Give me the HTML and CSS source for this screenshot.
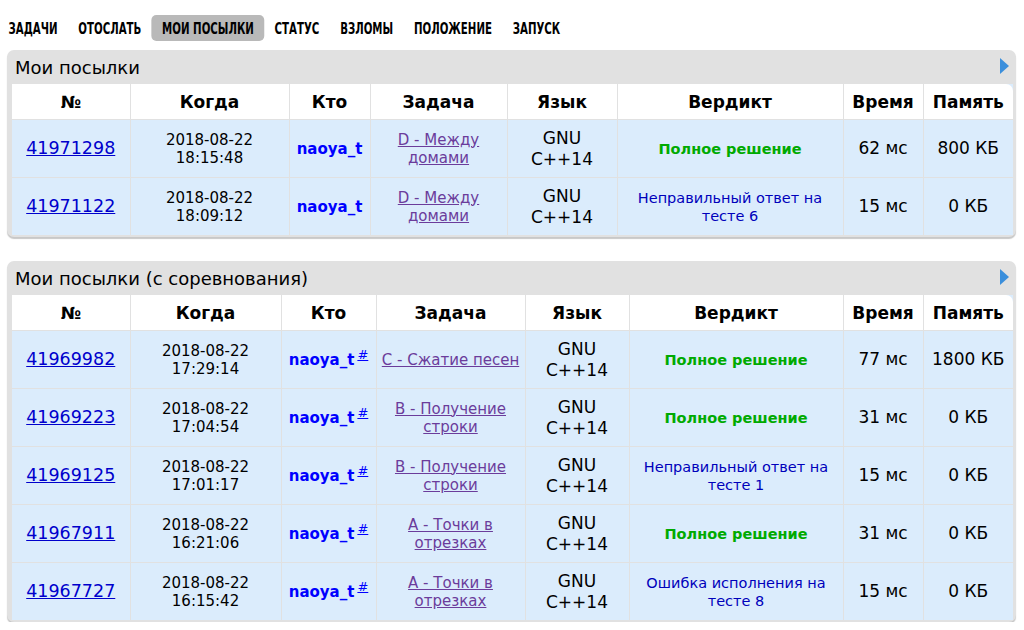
FILE: index.html
```html
<!DOCTYPE html>
<html lang="ru">
<head>
<meta charset="utf-8">
<title>Мои посылки</title>
<link rel="stylesheet" href="styles.css">
</head>
<body>
<nav class="menu">
  <a href="#">ЗАДАЧИ</a>
  <a href="#">ОТОСЛАТЬ</a>
  <a href="#" class="current">МОИ ПОСЫЛКИ</a>
  <a href="#">СТАТУС</a>
  <a href="#">ВЗЛОМЫ</a>
  <a href="#">ПОЛОЖЕНИЕ</a>
  <a href="#">ЗАПУСК</a>
</nav>

<section class="box">
  <div class="box-title"><span>Мои посылки</span><span class="toggle"></span></div>
  <table class="status t1">
    <colgroup>
      <col class="c-id"><col class="c-when"><col class="c-who"><col class="c-task"><col class="c-lang"><col class="c-verdict"><col class="c-time"><col class="c-mem">
    </colgroup>
    <tr class="head"><th>№</th><th>Когда</th><th>Кто</th><th>Задача</th><th>Язык</th><th>Вердикт</th><th>Время</th><th>Память</th></tr>
    <tr>
      <td><a class="sid" href="#">41971298</a></td>
      <td class="when">2018-08-22<br>18:15:48</td>
      <td><a class="user" href="#">naoya_t</a></td>
      <td><a class="task" href="#">D - Между<br>домами</a></td>
      <td class="lang">GNU<br>C++14</td>
      <td><span class="ok">Полное решение</span></td>
      <td class="num">62 мс</td>
      <td class="num">800 КБ</td>
    </tr>
    <tr>
      <td><a class="sid" href="#">41971122</a></td>
      <td class="when">2018-08-22<br>18:09:12</td>
      <td><a class="user" href="#">naoya_t</a></td>
      <td><a class="task" href="#">D - Между<br>домами</a></td>
      <td class="lang">GNU<br>C++14</td>
      <td><span class="fail">Неправильный ответ на<br>тесте 6</span></td>
      <td class="num">15 мс</td>
      <td class="num">0 КБ</td>
    </tr>
  </table>
</section>

<section class="box">
  <div class="box-title"><span>Мои посылки (с соревнования)</span><span class="toggle"></span></div>
  <table class="status t2">
    <colgroup>
      <col class="c-id"><col class="c-when"><col class="c-who"><col class="c-task"><col class="c-lang"><col class="c-verdict"><col class="c-time"><col class="c-mem">
    </colgroup>
    <tr class="head"><th>№</th><th>Когда</th><th>Кто</th><th>Задача</th><th>Язык</th><th>Вердикт</th><th>Время</th><th>Память</th></tr>
    <tr>
      <td><a class="sid" href="#">41969982</a></td>
      <td class="when">2018-08-22<br>17:29:14</td>
      <td><a class="user" href="#">naoya_t</a><sup><a class="room" href="#">#</a></sup></td>
      <td><a class="task" href="#">C - Сжатие песен</a></td>
      <td class="lang">GNU<br>C++14</td>
      <td><span class="ok">Полное решение</span></td>
      <td class="num">77 мс</td>
      <td class="num">1800 КБ</td>
    </tr>
    <tr>
      <td><a class="sid" href="#">41969223</a></td>
      <td class="when">2018-08-22<br>17:04:54</td>
      <td><a class="user" href="#">naoya_t</a><sup><a class="room" href="#">#</a></sup></td>
      <td><a class="task" href="#">B - Получение<br>строки</a></td>
      <td class="lang">GNU<br>C++14</td>
      <td><span class="ok">Полное решение</span></td>
      <td class="num">31 мс</td>
      <td class="num">0 КБ</td>
    </tr>
    <tr>
      <td><a class="sid" href="#">41969125</a></td>
      <td class="when">2018-08-22<br>17:01:17</td>
      <td><a class="user" href="#">naoya_t</a><sup><a class="room" href="#">#</a></sup></td>
      <td><a class="task" href="#">B - Получение<br>строки</a></td>
      <td class="lang">GNU<br>C++14</td>
      <td><span class="fail">Неправильный ответ на<br>тесте 1</span></td>
      <td class="num">15 мс</td>
      <td class="num">0 КБ</td>
    </tr>
    <tr>
      <td><a class="sid" href="#">41967911</a></td>
      <td class="when">2018-08-22<br>16:21:06</td>
      <td><a class="user" href="#">naoya_t</a><sup><a class="room" href="#">#</a></sup></td>
      <td><a class="task" href="#">A - Точки в<br>отрезках</a></td>
      <td class="lang">GNU<br>C++14</td>
      <td><span class="ok">Полное решение</span></td>
      <td class="num">31 мс</td>
      <td class="num">0 КБ</td>
    </tr>
    <tr>
      <td><a class="sid" href="#">41967727</a></td>
      <td class="when">2018-08-22<br>16:15:42</td>
      <td><a class="user" href="#">naoya_t</a><sup><a class="room" href="#">#</a></sup></td>
      <td><a class="task" href="#">A - Точки в<br>отрезках</a></td>
      <td class="lang">GNU<br>C++14</td>
      <td><span class="fail">Ошибка исполнения на<br>тесте 8</span></td>
      <td class="num">15 мс</td>
      <td class="num">0 КБ</td>
    </tr>
  </table>
</section>
</body>
</html>
```
FILE: styles.css
```css
html, body {
  margin: 0;
  padding: 0;
  background: #fff;
}

body {
  font-family: "DejaVu Sans", Verdana, sans-serif;
  color: #000;
  padding: 15px 8px 0 7px;
}

/* top second-level menu: a narrow bold face, squeezed horizontally */
.menu {
  display: flex;
  align-items: center;
  height: 26px;
  margin-left: -9.5px;
  transform: scaleX(0.71);
  transform-origin: left center;
}

.menu a {
  font-family: "DejaVu Sans Condensed", sans-serif;
  font-weight: bold;
  font-size: 16px;
  color: #000;
  text-decoration: none;
  padding: 0 14.5px 0 14.8px;
  height: 26px;
  line-height: 28px;
  border-radius: 7px / 5px;
  white-space: nowrap;
}

.menu a.current {
  background: #b9b9b9;
}

/* roundbox */
.box {
  background: #e1e1e1;
  border-radius: 7px;
  padding: 0 3px 2px 5px;
  box-shadow: 0 2px 1px #c8c8c8;
  margin-top: 9px;
}

.box + .box {
  margin-top: 24px;
}

.box-title {
  display: flex;
  justify-content: space-between;
  align-items: center;
  height: 34px;
  padding: 0 4px 0 3px;
  font-size: 18px;
  color: #000;
}

.toggle {
  width: 0;
  height: 0;
  border-top: 8px solid transparent;
  border-bottom: 8px solid transparent;
  border-left: 9px solid #3b8fdc;
  margin-top: -3px;
}

/* status table */
.status {
  width: 100%;
  border-collapse: collapse;
  table-layout: fixed;
  background: #dbecfc;
}

.status th,
.status td {
  border: 1px solid #e1e1e1;
  text-align: center;
  vertical-align: middle;
  padding: 0 4px;
}

.status tr:first-child th { border-top: none; }
.status tr th:first-child,
.status tr td:first-child { border-left: none; }
.status tr th:last-child,
.status tr td:last-child { border-right: none; }
.status tr:last-child td { border-bottom: none; }

.status .head {
  background: #fff;
}

.status .head th {
  height: 35px;
  font-size: 17px;
  font-weight: bold;
}

.status .head th:last-child {
  border-top-right-radius: 7px;
}

.status td {
  height: 57px;
  font-size: 15px;
  line-height: 18px;
}

.t1 .c-id { width: 118px; }
.t1 .c-when { width: 159px; }
.t1 .c-who { width: 81px; }
.t1 .c-task { width: 137px; }
.t1 .c-lang { width: 110px; }
.t1 .c-verdict { width: 226px; }
.t1 .c-time { width: 80px; }
.t1 .c-mem { width: 90px; }

.t2 .c-id { width: 118px; }
.t2 .c-when { width: 151px; }
.t2 .c-who { width: 95px; }
.t2 .c-task { width: 149px; }
.t2 .c-lang { width: 104px; }
.t2 .c-verdict { width: 214px; }
.t2 .c-time { width: 80px; }
.t2 .c-mem { width: 90px; }

.sid {
  font-size: 17.5px;
  color: #0000cc;
  text-decoration: underline;
}

.user {
  color: #0000ff;
  font-weight: bold;
  text-decoration: none;
}

.room {
  color: #0000ff;
  font-size: 13px;
  margin-left: 3px;
  text-decoration: underline;
}

sup {
  vertical-align: 6px;
  line-height: 0;
}

.task {
  color: #6b3c9b;
  text-decoration: underline;
}

.status td.lang,
.status td.num {
  font-size: 17px;
  line-height: 21px;
}

.ok {
  color: #0a0;
  font-weight: bold;
  font-size: 14.5px;
}

.fail {
  color: #0000bb;
  font-size: 14.5px;
}
```
